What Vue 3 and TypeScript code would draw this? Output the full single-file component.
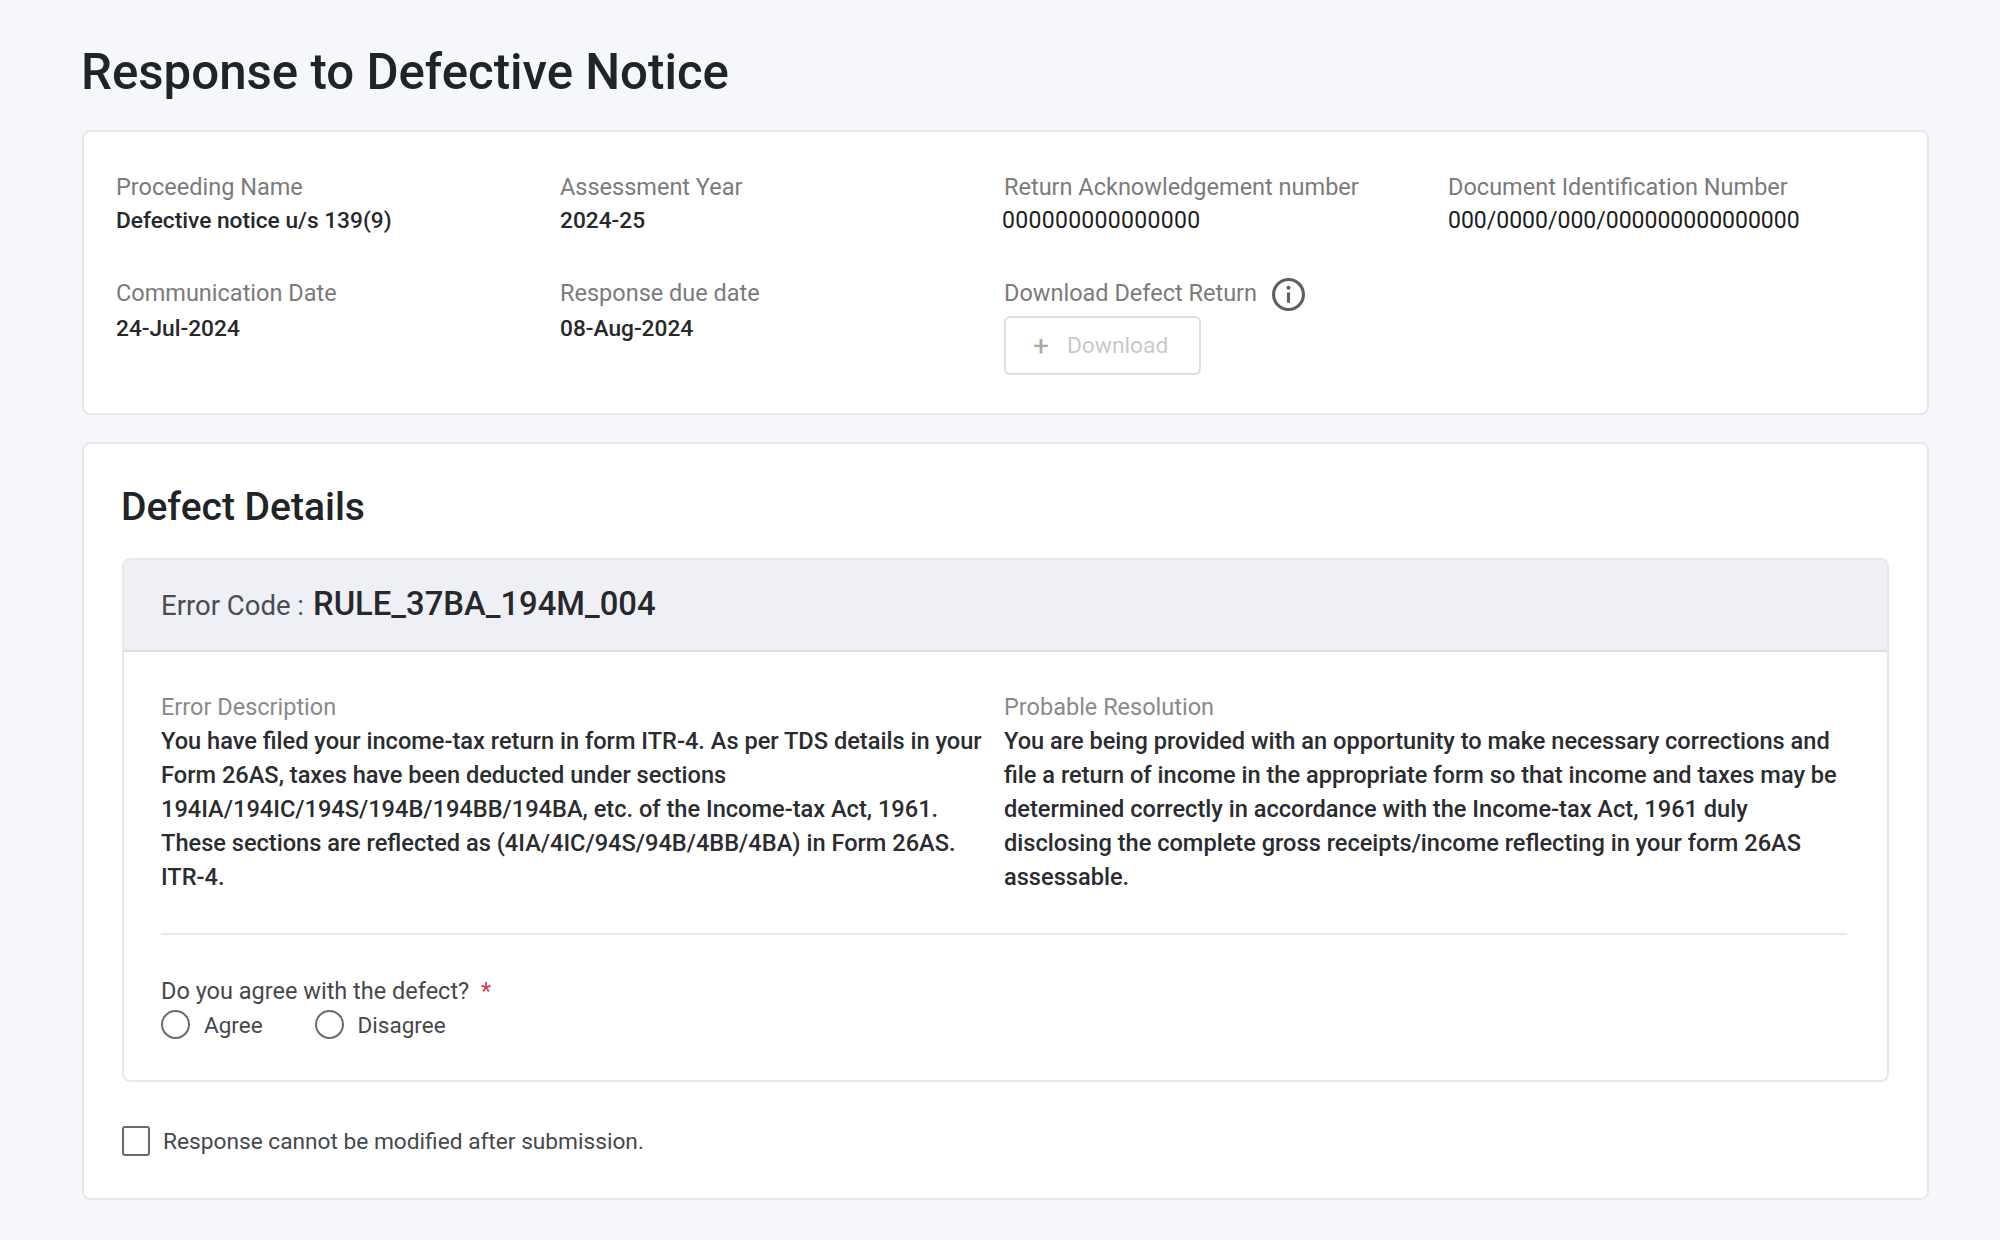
<script setup lang="ts">
const info = [
  { label: 'Proceeding Name', value: 'Defective notice u/s 139(9)', kind: '' },
  { label: 'Assessment Year', value: '2024-25', kind: '' },
  { label: 'Return Acknowledgement number', value: '000000000000000', kind: 'plain ack' },
  { label: 'Document Identification Number', value: '000/0000/000/000000000000000', kind: 'plain' },
  { label: 'Communication Date', value: '24-Jul-2024', kind: 'lower' },
  { label: 'Response due date', value: '08-Aug-2024', kind: 'lower' },
]
</script>

<template>
  <div class="page">
    <h1>Response to Defective Notice</h1>

    <section class="card info">
      <div v-for="item in info" :key="item.label" class="field">
        <div class="label">{{ item.label }}</div>
        <div class="value" :class="item.kind">{{ item.value }}</div>
      </div>
      <div class="field">
        <div class="label with-icon">
          Download Defect Return
          <svg class="info-icon" width="35" height="35" viewBox="0 0 34 34" fill="none">
            <circle cx="17" cy="17" r="14.5" stroke="#5f5f5f" stroke-width="3" />
            <circle cx="17" cy="10.5" r="2" fill="#5f5f5f" />
            <path d="M17 15v10" stroke="#5f5f5f" stroke-width="3" />
          </svg>
        </div>
        <button class="download" disabled>
          <span class="plus">+</span>
          Download
        </button>
      </div>
    </section>

    <section class="card details">
      <h2>Defect Details</h2>
      <div class="error-box">
        <div class="error-head">
          <span class="code-label">Error Code :</span>
          <span class="code">RULE_37BA_194M_004</span>
        </div>
        <div class="error-body">
          <div class="columns">
            <div class="col-left">
              <div class="label">Error Description</div>
              <p>You have filed your income-tax return in form ITR-4. As per TDS details in your Form 26AS, taxes have been deducted under sections 194IA/194IC/194S/194B/194BB/194BA, etc. of the Income-tax Act, 1961. These sections are reflected as (4IA/4IC/94S/94B/4BB/4BA) in Form 26AS. ITR-4.</p>
            </div>
            <div>
              <div class="label">Probable Resolution</div>
              <p>You are being provided with an opportunity to make necessary corrections and file a return of income in the appropriate form so that income and taxes may be determined correctly in accordance with the Income-tax Act, 1961 duly disclosing the complete gross receipts/income reflecting in your form 26AS assessable.</p>
            </div>
          </div>
          <div class="question">
            <div class="q-text">Do you agree with the defect? <span class="req">*</span></div>
            <div class="radios">
              <label class="radio"><span class="dot"></span>Agree</label>
              <label class="radio"><span class="dot"></span>Disagree</label>
            </div>
          </div>
        </div>
      </div>
      <label class="confirm"><span class="box"></span>Response cannot be modified after submission.</label>
    </section>
  </div>
</template>

<style scoped>
.page {
  width: 1847px;
  margin-left: 82px;
  padding-top: 37px;
  font-family: Roboto, "Liberation Sans", sans-serif;
}
h1 {
  margin: 0 0 23px -1px;
  font-size: 49.2px;
  line-height: 70px;
  font-weight: 500;
  color: #212427;
}
.card {
  background: #fff;
  border: 2px solid #e6e8ec;
  border-radius: 8px;
}
.info {
  height: 285px;
  box-sizing: border-box;
  padding: 38px 32px 0;
  display: grid;
  grid-template-columns: repeat(4, 444px);
  grid-template-rows: 106px 1fr;
  margin-bottom: 27px;
}
.label {
  font-size: 23.5px;
  line-height: 34px;
  color: #7b7b7b;
}
.with-icon {
  display: flex;
  align-items: center;
  gap: 14px;
  height: 34px;
}
.info-icon {
  margin-top: 2px;
}
.value {
  font-size: 22.7px;
  line-height: 34px;
  font-weight: 500;
  color: #26282b;
}
.value.lower {
  margin-top: 2px;
}
.value.plain {
  font-size: 23px;
  font-weight: 400;
  color: #1d1d1d;
}
.value.ack {
  margin-left: -2px;
  letter-spacing: 0.3px;
}
.download {
  display: flex;
  align-items: center;
  gap: 18px;
  width: 197px;
  height: 59px;
  margin-top: 6px;
  padding: 0 0 0 27px;
  background: #fff;
  border: 2px solid #dedede;
  border-radius: 6px;
  font: 400 22.8px Roboto, "Liberation Sans", sans-serif;
  color: #c9c9c9;
}
.plus {
  font-size: 28px;
  color: #a8a8a8;
}
.details {
  height: 758px;
  box-sizing: border-box;
  padding: 0 38px;
}
h2 {
  margin: 0 0 0 -1px;
  padding-top: 33px;
  font-size: 39px;
  line-height: 60px;
  font-weight: 500;
  color: #212427;
}
.error-box {
  margin-top: 21px;
  height: 524px;
  box-sizing: border-box;
  border: 2px solid #e6e8ec;
  border-radius: 8px;
  overflow: hidden;
}
.error-head {
  display: flex;
  align-items: baseline;
  gap: 9px;
  height: 90px;
  line-height: 88px;
  padding-left: 37px;
  background: #eef0f5;
  border-bottom: 2px solid #dcdee2;
}
.code-label {
  font-size: 27.5px;
  color: #4a4d50;
}
.code {
  font-size: 32.8px;
  font-weight: 500;
  color: #26282b;
}
.error-body {
  padding: 38px 40px 0 37px;
}
.columns {
  display: grid;
  grid-template-columns: 843px 1fr;
  padding-bottom: 39px;
  border-bottom: 2px solid #e8e8e8;
}
.col-left {
  padding-right: 12px;
}
.columns p {
  margin: 0;
  font-size: 23.6px;
  line-height: 34px;
  font-weight: 500;
  color: #2a2c2f;
}
.columns .label {
  color: #8a8a8a;
}
.question {
  margin-top: 39px;
}
.q-text {
  font-size: 23.5px;
  line-height: 34px;
  color: #45484b;
}
.req {
  margin-left: 6px;
  color: #d9364f;
}
.radios {
  display: flex;
  gap: 52px;
  margin-top: 2px;
}
.radio {
  display: flex;
  align-items: center;
  gap: 14px;
  font-size: 22.5px;
  color: #45484b;
}
.dot {
  width: 25px;
  height: 25px;
  border: 2px solid #6a6a6a;
  border-radius: 50%;
}
.confirm {
  display: flex;
  align-items: center;
  gap: 13px;
  margin-top: 44px;
  font-size: 22.7px;
  color: #45484b;
}
.box {
  width: 24px;
  height: 26px;
  border: 2px solid #6a6a6a;
  border-radius: 3px;
}
</style>

<style>
html, body {
  background: #f5f7fa;
}
</style>
